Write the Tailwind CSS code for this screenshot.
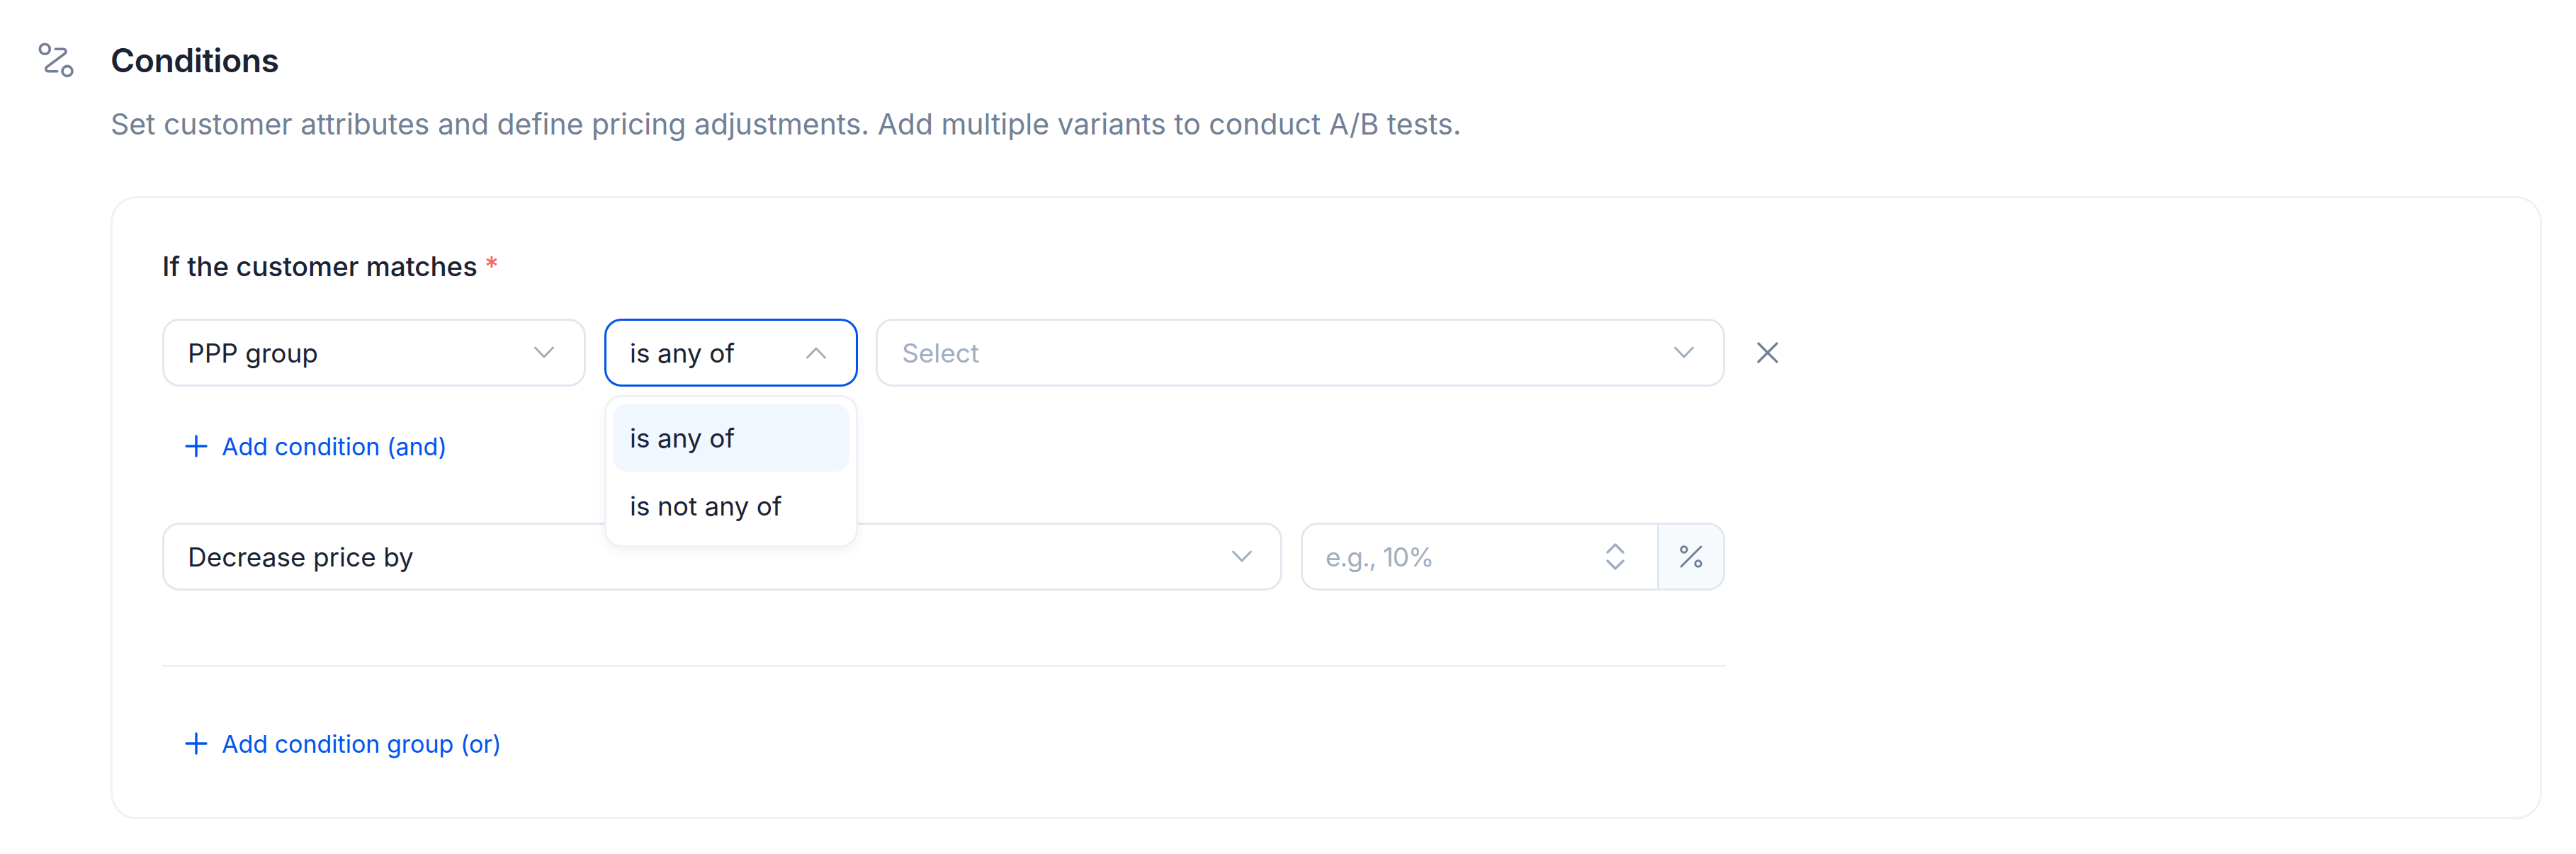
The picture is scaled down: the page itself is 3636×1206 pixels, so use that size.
<!DOCTYPE html>
<html lang="en">
<head>
    <meta charset="UTF-8">
    <title>Conditions</title>
    <script src="https://cdn.jsdelivr.net/npm/@tailwindcss/browser@4"></script>
</head>
<body class="bg-white font-['Inter',sans-serif] text-[37px] text-[#1a2233]">

    <div class="flex pl-[52px] pt-[57px]">
        <!-- route icon -->
        <div class="w-[104px] shrink-0">
            <svg class="w-[56px] h-[56px]" viewBox="0 0 56 56" fill="none" stroke="#718096" stroke-width="3.6" stroke-linecap="round">
                <circle cx="11.3" cy="12.3" r="7"/>
                <circle cx="43" cy="43.4" r="7"/>
                <path d="M26.3 12.3H37.5a3.5 3.5 0 0 1 2.6 5.8L13.5 38a3.500 3.500 0 0 0 2.600 5.700H28.700"/>
            </svg>
        </div>

        <div class="w-[3432px]">
            <h2 class="h-[56px] leading-[56px] text-[46.4px] font-semibold tracking-[-0.5px]">Conditions</h2>
            <p class="mt-[37px] h-[50px] leading-[50px] text-[40.9px] text-[#718096]">Set customer attributes and define pricing adjustments. Add multiple variants to conduct A/B tests.</p>

            <div class="mt-[77px] border-[3px] border-[#eef2f7] rounded-[37px] pl-[70px] pt-[76px] pb-[80px]">
                <label class="block h-[40px] leading-[40px] text-[38.4px] font-medium">If the customer matches <span class="text-[#f56565]">*</span></label>

                <div class="mt-[54px] flex items-center">
                    <div class="w-[598px] h-[96px] flex items-center justify-between border-[3px] border-[#e2e8f0] rounded-[24px] pl-[33px] pr-[40px]">
                        <span class="pt-[2px]">PPP group</span>
                        <svg class="w-[32px] h-[20px]" viewBox="0 0 32 20" fill="none" stroke="#a0aec0" stroke-width="3" stroke-linecap="round" stroke-linejoin="round"><path d="M3.5 3L16 16 28.500 3"/></svg>
                    </div>

                    <div class="relative ml-[26px]">
                        <div class="w-[358px] h-[96px] flex items-center justify-between border-[3px] border-[#0055ee] rounded-[24px] pl-[33px] pr-[40px]">
                            <span class="pt-[2px]">is any of</span>
                            <svg class="w-[32px] h-[20px]" viewBox="0 0 32 20" fill="none" stroke="#a0aec0" stroke-width="3" stroke-linecap="round" stroke-linejoin="round"><path d="M3.500 17L16 4l12.500 13"/></svg>
                        </div>
                        <!-- open menu -->
                        <div class="absolute left-0 top-[108px] w-[358px] h-[215px] bg-white border-[3px] border-[#eef2f7] rounded-[24px] p-[9px] shadow-[0_6px_16px_rgba(15,23,42,0.05)] z-10">
                            <div class="h-[96px] flex items-center pl-[24px] pt-[2px] bg-[#f0f7ff] rounded-[20px]">is any of</div>
                            <div class="h-[96px] flex items-center pl-[24px] pt-[2px]">is not any of</div>
                        </div>
                    </div>

                    <div class="ml-[25px] w-[1199px] h-[96px] flex items-center justify-between border-[3px] border-[#e2e8f0] rounded-[24px] pl-[34px] pr-[39px]">
                        <span class="pt-[2px] text-[#a0aec0]">Select</span>
                        <svg class="w-[32px] h-[20px]" viewBox="0 0 32 20" fill="none" stroke="#a0aec0" stroke-width="3" stroke-linecap="round" stroke-linejoin="round"><path d="M3.500 3L16 16 28.500 3"/></svg>
                    </div>

                    <svg class="ml-[44px] w-[32px] h-[32px]" viewBox="0 0 32 32" fill="none" stroke="#718096" stroke-width="3.2" stroke-linecap="round"><path d="M3 3l26 26M29 3L3 29"/></svg>
                </div>

                <div class="mt-[60px] h-[48px] flex items-center pl-[32px] text-[#0055ee] text-[34px]">
                    <svg class="w-[32px] h-[32px]" viewBox="0 0 32 32" fill="none" stroke="#0055ee" stroke-width="3.4" stroke-linecap="round"><path d="M16 2v28M2 16h28"/></svg>
                    <span class="ml-[20px]">Add condition (and)</span>
                </div>

                <div class="mt-[84px] flex w-[2206px]">
                    <div class="w-[1581px] h-[96px] flex items-center justify-between border-[3px] border-[#e2e8f0] rounded-[24px] pl-[33px] pr-[38px]">
                        <span class="pt-[2px]">Decrease price by</span>
                        <svg class="w-[32px] h-[20px]" viewBox="0 0 32 20" fill="none" stroke="#a0aec0" stroke-width="3" stroke-linecap="round" stroke-linejoin="round"><path d="M3.500 3L16 16 28.500 3"/></svg>
                    </div>
                    <div class="ml-[26px] w-[599px] h-[96px] flex border-[3px] border-[#e2e8f0] rounded-[24px] overflow-hidden">
                        <div class="flex-1 flex items-center justify-between pl-[32px] pr-[45px]">
                            <span class="pt-[2px] text-[#a0aec0] tracking-[-1px]">e.g., 10%</span>
                            <svg class="w-[28px] h-[40px]" viewBox="0 0 28 40" fill="none" stroke="#a0aec0" stroke-width="3.4" stroke-linecap="round" stroke-linejoin="round"><path d="M3 14L14 3l11 11M3 26l11 11 11-11"/></svg>
                        </div>
                        <div class="w-[93px] flex items-center justify-center border-l-[3px] border-[#e2e8f0] bg-[#f7fafc]">
                            <svg class="w-[34px] h-[34px]" viewBox="0 0 34 34" fill="none" stroke="#718096" stroke-width="3" stroke-linecap="round"><circle cx="7" cy="7" r="4.2"/><circle cx="27" cy="27" r="4.2"/><path d="M31 3L3 31"/></svg>
                        </div>
                    </div>
                </div>

                <div class="mt-[105px] w-[2207px] border-t-[3px] border-[#eef2f7]"></div>

                <div class="mt-[84px] h-[48px] flex items-center pl-[32px] text-[#0055ee] text-[34px]">
                    <svg class="w-[32px] h-[32px]" viewBox="0 0 32 32" fill="none" stroke="#0055ee" stroke-width="3.4" stroke-linecap="round"><path d="M16 2v28M2 16h28"/></svg>
                    <span class="ml-[20px]">Add condition group (or)</span>
                </div>
            </div>
        </div>
    </div>

</body>
</html>
